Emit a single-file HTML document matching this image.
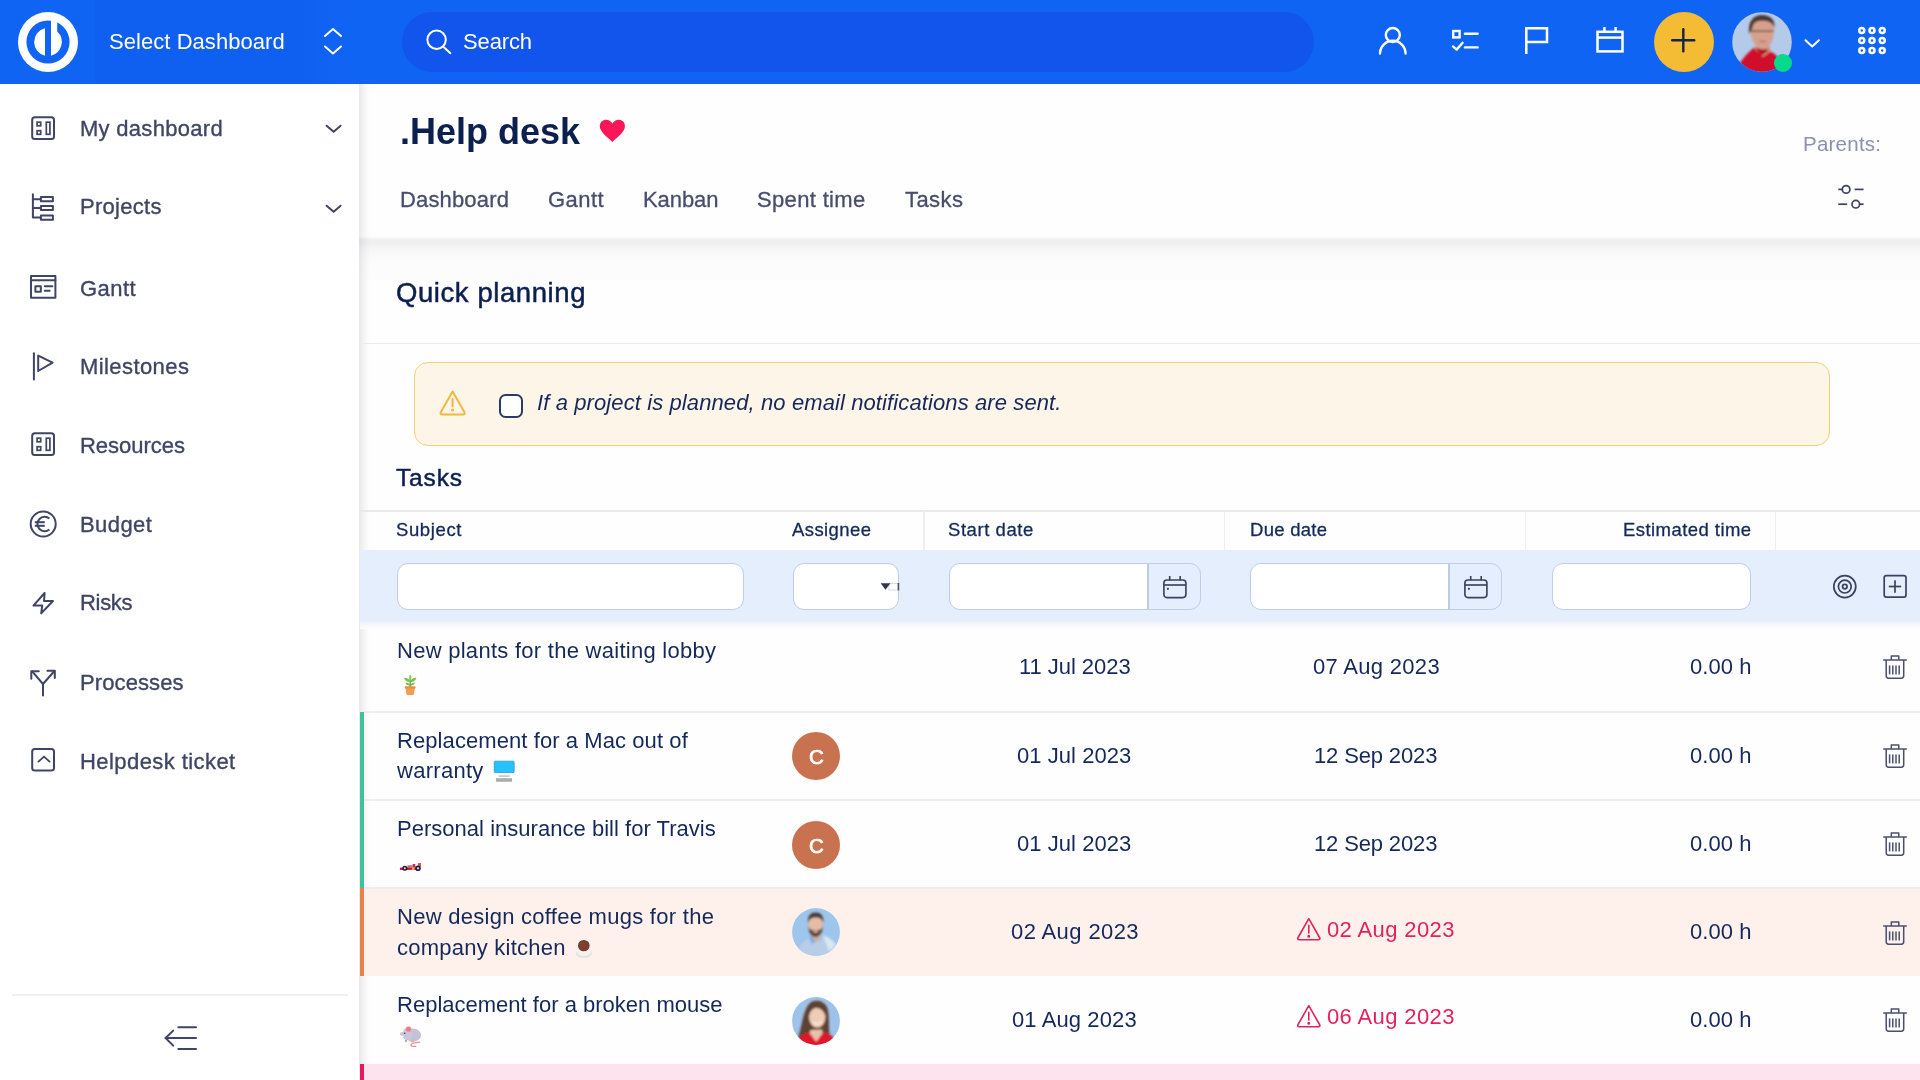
<!DOCTYPE html>
<html lang="en">
<head>
<meta charset="utf-8">
<title>.Help desk - Quick planning</title>
<style>
*{box-sizing:border-box;margin:0;padding:0}
html,body{width:1920px;height:1080px;overflow:hidden;background:#fff}
body{font-family:"Liberation Sans",sans-serif;position:relative;color:#14285a}
.abs{position:absolute}
.t{position:absolute;white-space:nowrap;line-height:1;will-change:transform}
svg{position:absolute;overflow:visible}

/* ---------- top bar ---------- */
#top{position:absolute;left:0;top:0;width:1920px;height:84px;background:#1064f4}
#dashsel{position:absolute;left:95px;top:0;width:260px;height:84px;background:linear-gradient(90deg,#0f60f1,#0f60f1 80%,#1064f4)}
#search{position:absolute;left:402px;top:12px;width:912px;height:60px;border-radius:30px;background:#1155ec}

/* ---------- sidebar ---------- */
#side{position:absolute;left:0;top:84px;width:359px;height:996px;background:#fff}
.ico{stroke:#3f4565;fill:none;stroke-width:2;stroke-linecap:round;stroke-linejoin:round}

/* ---------- main ---------- */
#main{position:absolute;left:359px;top:84px;width:1561px;height:996px;background:#fefefe}
</style>
</head>
<body>

<div id="main"></div>
<div class="abs" style="left:359px;top:236px;width:1561px;height:44px;background:linear-gradient(to bottom,#fff 0,#f4f4f5 2.5px,#eeeeef 5px,#f1f1f2 8px,#f5f5f6 12px,#f9f9fa 17px,#fbfbfb 23px,#fdfdfd 44px)"></div>
<div class="abs" style="left:359px;top:84px;width:11px;height:996px;background:linear-gradient(to right,rgba(20,20,40,.088) 0,rgba(20,20,40,.066) 2.5px,rgba(20,20,40,.04) 5px,rgba(20,20,40,.018) 8px,rgba(20,20,40,0) 11px)"></div>
<div class="t" style="left:400.10px;top:107.9px;font-size:36px;line-height:47px;color:#0c2050;letter-spacing:0.006px;font-weight:bold;">.Help desk</div>
<svg style="left:599px;top:119px" width="27" height="24" viewBox="0 0 27 24"><path d="M13.4 23 C10 19.8 2.6 14.2 1.2 9.6 C-0.2 4.6 2.8 0.8 7 0.8 C9.8 0.8 12 2.2 13.4 4.6 C14.8 2.2 17 0.8 19.8 0.8 C24 0.8 27 4.6 25.6 9.6 C24.2 14.2 16.8 19.8 13.4 23 Z" fill="#fb1758"/></svg>
<div class="t" style="left:1802.90px;top:130.0px;font-size:20.5px;line-height:27px;color:#8b91ab;letter-spacing:0.236px;">Parents:</div>
<div class="t" style="left:400.40px;top:184.5px;font-size:22px;line-height:29px;color:#474d6c;letter-spacing:0.156px;-webkit-text-stroke:0.3px #474d6c;">Dashboard</div>
<div class="t" style="left:548.30px;top:184.5px;font-size:22px;line-height:29px;color:#474d6c;letter-spacing:0.450px;-webkit-text-stroke:0.3px #474d6c;">Gantt</div>
<div class="t" style="left:642.50px;top:184.5px;font-size:22px;line-height:29px;color:#474d6c;letter-spacing:-0.070px;-webkit-text-stroke:0.3px #474d6c;">Kanban</div>
<div class="t" style="left:757.30px;top:184.5px;font-size:22px;line-height:29px;color:#474d6c;letter-spacing:0.339px;-webkit-text-stroke:0.3px #474d6c;">Spent time</div>
<div class="t" style="left:904.50px;top:184.5px;font-size:22px;line-height:29px;color:#474d6c;letter-spacing:0.438px;-webkit-text-stroke:0.3px #474d6c;">Tasks</div>
<svg style="left:1834px;top:180px" width="34" height="34" viewBox="0 0 34 34" fill="none" stroke="#3c4160" stroke-width="1.7" stroke-linecap="butt"><circle cx="12.1" cy="9.4" r="3.8"/><path d="M4.3 9.4 L8.3 9.4"/><path d="M20.7 9.4 L29.6 9.4"/><circle cx="21.8" cy="24.2" r="3.8"/><path d="M4.3 24.2 L13.2 24.2"/><path d="M25.6 24.2 L29.6 24.2"/></svg>
<div class="t" style="left:396.40px;top:275.3px;font-size:27.5px;line-height:36px;color:#0c2050;letter-spacing:0.577px;-webkit-text-stroke:0.5px #0c2050;">Quick planning</div>
<div class="abs" style="left:360px;top:342.8px;width:1560px;height:1.6px;background:#ebebef"></div>
<div class="abs" style="left:414px;top:362px;width:1416px;height:84.4px;border:1.6px solid #f3cf7c;border-radius:14px;background:#fdf5e7"></div>
<svg style="left:437px;top:388px" width="32" height="30" viewBox="0 0 32 30" fill="none" stroke="#f1b73f" stroke-width="2" stroke-linejoin="round" stroke-linecap="round"><path d="M15.6 3.6 L3.6 24.6 Q3.2 26.4 5 26.4 L26.2 26.4 Q28 26.4 27.6 24.6 Z"/><path d="M15.6 11 L15.6 18.4"/><circle cx="15.6" cy="22" r=".6" fill="#f1b73f"/></svg>
<div class="abs" style="left:499.2px;top:393.6px;width:24px;height:24px;border:2px solid #2c3a63;border-radius:6.5px;background:#fff"></div>
<div class="t" style="left:536.70px;top:387.7px;font-size:22px;line-height:29px;color:#14285a;letter-spacing:0.105px;font-style:italic;">If a project is planned, no email notifications are sent.</div>
<div class="t" style="left:396.40px;top:461.5px;font-size:24.5px;line-height:32px;color:#0c2050;letter-spacing:0.838px;-webkit-text-stroke:0.5px #0c2050;">Tasks</div>
<div class="abs" style="left:360px;top:510px;width:1560px;height:1.6px;background:#e9e9ed"></div>
<div class="abs" style="left:923.2px;top:511px;width:1.6px;height:39px;background:#eeeef2"></div>
<div class="abs" style="left:1223.6px;top:511px;width:1.6px;height:39px;background:#eeeef2"></div>
<div class="abs" style="left:1524.6px;top:511px;width:1.6px;height:39px;background:#eeeef2"></div>
<div class="abs" style="left:1774.8px;top:511px;width:1.6px;height:39px;background:#eeeef2"></div>
<div class="t" style="left:396.40px;top:518.1px;font-size:18.5px;line-height:24px;color:#14285a;letter-spacing:0.617px;-webkit-text-stroke:0.3px #14285a;">Subject</div>
<div class="t" style="left:792.00px;top:518.1px;font-size:18.5px;line-height:24px;color:#14285a;letter-spacing:0.414px;-webkit-text-stroke:0.3px #14285a;">Assignee</div>
<div class="t" style="left:948.25px;top:518.1px;font-size:18.5px;line-height:24px;color:#14285a;letter-spacing:0.561px;-webkit-text-stroke:0.3px #14285a;">Start date</div>
<div class="t" style="left:1249.80px;top:518.1px;font-size:18.5px;line-height:24px;color:#14285a;letter-spacing:0.271px;-webkit-text-stroke:0.3px #14285a;">Due date</div>
<div class="t" style="left:1622.60px;top:518.1px;font-size:18.5px;line-height:24px;color:#14285a;letter-spacing:0.442px;-webkit-text-stroke:0.3px #14285a;">Estimated time</div>
<div class="abs" style="left:360px;top:550px;width:1560px;height:79px;background:linear-gradient(to bottom,#e4eefc 0,#e4eefc 68px,#e9f0fc 71px,#f3f6fd 74.5px,#fbfcfe 77.5px,#fefefe 79px)"></div>
<div class="abs" style="left:396.5px;top:563px;width:347px;height:47.4px;border:1.5px solid #bfcdea;border-radius:11px;background:#fff"></div>
<div class="abs" style="left:792.5px;top:563px;width:106.8px;height:47.4px;border:1.5px solid #bfcdea;border-radius:11px;background:#fff"></div>
<svg style="left:878px;top:580px" width="24" height="14" viewBox="0 0 24 14"><rect x="11" y="3.4" width="10" height="6.6" fill="#fff" stroke="#d8dbe4" stroke-width="1"/><rect x="19.6" y="3" width="1.6" height="7.4" fill="#4a4f6e"/><path d="M2.6 3.2 L12.4 3.2 L7.5 9.8 Z" fill="#33344f"/></svg>
<div class="abs" style="left:948.5px;top:563px;width:252px;height:47.4px;border:1.5px solid #bfcdea;border-radius:11px;background:#e4eefc;overflow:hidden"><div style="position:absolute;left:0;top:0;width:199.6px;height:100%;background:#fff;border-right:2.3px solid #bccbe8"></div></div>
<svg style="left:1159.5px;top:573px" width="30" height="28" viewBox="0 0 30 28" fill="none" stroke="#3c4160" stroke-width="1.65" stroke-linecap="butt"><rect x="3.9" y="7" width="22" height="17.6" rx="3"/><path d="M3.9 12 L25.9 12"/><path d="M9.7 3 L9.7 7.4"/><path d="M20.2 3 L20.2 7.4"/><circle cx="7.9" cy="15.8" r="1.1" fill="#3c4160" stroke="none"/></svg>
<div class="abs" style="left:1249.7px;top:563px;width:252px;height:47.4px;border:1.5px solid #bfcdea;border-radius:11px;background:#e4eefc;overflow:hidden"><div style="position:absolute;left:0;top:0;width:199.6px;height:100%;background:#fff;border-right:2.3px solid #bccbe8"></div></div>
<svg style="left:1460.7px;top:573px" width="30" height="28" viewBox="0 0 30 28" fill="none" stroke="#3c4160" stroke-width="1.65" stroke-linecap="butt"><rect x="3.9" y="7" width="22" height="17.6" rx="3"/><path d="M3.9 12 L25.9 12"/><path d="M9.7 3 L9.7 7.4"/><path d="M20.2 3 L20.2 7.4"/><circle cx="7.9" cy="15.8" r="1.1" fill="#3c4160" stroke="none"/></svg>
<div class="abs" style="left:1552.2px;top:563px;width:199.2px;height:47.4px;border:1.5px solid #bfcdea;border-radius:11px;background:#fff"></div>
<svg style="left:1830px;top:572px" width="30" height="30" viewBox="0 0 30 30" fill="none" stroke="#3c4160" stroke-width="1.7"><circle cx="14.8" cy="14.6" r="11"/><circle cx="14.8" cy="14.6" r="6.4"/><circle cx="14.8" cy="14.6" r="2.3"/></svg>
<svg style="left:1880px;top:572px" width="30" height="30" viewBox="0 0 30 30" fill="none" stroke="#3c4160" stroke-width="1.7" stroke-linecap="butt"><rect x="4.2" y="3.6" width="21.8" height="21.6" rx="2.2"/><path d="M8.8 14.5 L21.2 14.5"/><path d="M15 8.2 L15 20.8"/></svg>
<div class="abs" style="left:360px;top:888.3px;width:1560px;height:87.5px;background:#fef0ea"></div>
<div class="abs" style="left:360px;top:1064.4px;width:1560px;height:16px;background:#fce3ee"></div>
<div class="abs" style="left:360px;top:711.2px;width:1560px;height:1.5px;background:#ededf0"></div>
<div class="abs" style="left:360px;top:799.2px;width:1560px;height:1.5px;background:#ededf0"></div>
<div class="abs" style="left:360px;top:887.4px;width:1560px;height:1.5px;background:#ededf0"></div>
<div class="abs" style="left:360px;top:712px;width:3.8px;height:176.3px;background:#3dc39b"></div>
<div class="abs" style="left:360px;top:888.3px;width:3.8px;height:87.5px;background:#e9814b"></div>
<div class="abs" style="left:360px;top:1064.4px;width:3.8px;height:16px;background:#e8185e"></div>
<div class="t" style="left:396.50px;top:636.2px;font-size:22px;line-height:29px;color:#14285a;letter-spacing:0.271px;">New plants for the waiting lobby</div>
<div class="t" style="left:396.50px;top:726.1px;font-size:22px;line-height:29px;color:#14285a;letter-spacing:0.080px;">Replacement for a Mac out of</div>
<div class="t" style="left:396.55px;top:756.3px;font-size:22px;line-height:29px;color:#14285a;letter-spacing:0.286px;">warranty</div>
<div class="t" style="left:396.50px;top:813.9px;font-size:22px;line-height:29px;color:#14285a;letter-spacing:0.024px;">Personal insurance bill for Travis</div>
<div class="t" style="left:396.50px;top:901.7px;font-size:22px;line-height:29px;color:#14285a;letter-spacing:0.272px;">New design coffee mugs for the</div>
<div class="t" style="left:396.50px;top:932.7px;font-size:22px;line-height:29px;color:#14285a;letter-spacing:0.236px;">company kitchen</div>
<div class="t" style="left:396.50px;top:989.9px;font-size:22px;line-height:29px;color:#14285a;letter-spacing:0.007px;">Replacement for a broken mouse</div>
<div class="t" style="left:1018.50px;top:652.3px;font-size:22px;line-height:29px;color:#14285a;letter-spacing:-0.045px;">11 Jul 2023</div>
<div class="t" style="left:1312.80px;top:652.3px;font-size:22px;line-height:29px;color:#14285a;letter-spacing:0.305px;">07 Aug 2023</div>
<div class="t" style="left:1690.10px;top:652.3px;font-size:22px;line-height:29px;color:#14285a;letter-spacing:0.050px;">0.00 h</div>
<svg style="left:1880px;top:652.4px" width="30" height="30" viewBox="0 0 30 30" fill="none" stroke="#4a4f6e" stroke-width="1.5" stroke-linecap="butt" stroke-linejoin="round"><path d="M3.2 8 L26.8 8"/><path d="M11.3 8 L11.3 4 L18.8 4 L18.8 8"/><path d="M6.2 8 L6.2 23.8 Q6.2 26.2 8.6 26.2 L21.3 26.2 Q23.7 26.2 23.7 23.8 L23.7 8"/><path d="M9.6 13.4 L9.6 22.4"/><path d="M12.8 13.4 L12.8 22.4"/><path d="M16 13.4 L16 22.4"/><path d="M19.2 13.4 L19.2 22.4"/></svg>
<div class="t" style="left:1017.30px;top:741.2px;font-size:22px;line-height:29px;color:#14285a;letter-spacing:0.045px;">01 Jul 2023</div>
<div class="t" style="left:1314.10px;top:741.2px;font-size:22px;line-height:29px;color:#14285a;letter-spacing:-0.140px;">12 Sep 2023</div>
<div class="t" style="left:1690.10px;top:741.2px;font-size:22px;line-height:29px;color:#14285a;letter-spacing:0.050px;">0.00 h</div>
<svg style="left:1880px;top:741.3px" width="30" height="30" viewBox="0 0 30 30" fill="none" stroke="#4a4f6e" stroke-width="1.5" stroke-linecap="butt" stroke-linejoin="round"><path d="M3.2 8 L26.8 8"/><path d="M11.3 8 L11.3 4 L18.8 4 L18.8 8"/><path d="M6.2 8 L6.2 23.8 Q6.2 26.2 8.6 26.2 L21.3 26.2 Q23.7 26.2 23.7 23.8 L23.7 8"/><path d="M9.6 13.4 L9.6 22.4"/><path d="M12.8 13.4 L12.8 22.4"/><path d="M16 13.4 L16 22.4"/><path d="M19.2 13.4 L19.2 22.4"/></svg>
<div class="t" style="left:1017.30px;top:829.2px;font-size:22px;line-height:29px;color:#14285a;letter-spacing:0.045px;">01 Jul 2023</div>
<div class="t" style="left:1314.10px;top:829.2px;font-size:22px;line-height:29px;color:#14285a;letter-spacing:-0.140px;">12 Sep 2023</div>
<div class="t" style="left:1690.10px;top:829.2px;font-size:22px;line-height:29px;color:#14285a;letter-spacing:0.050px;">0.00 h</div>
<svg style="left:1880px;top:829.3px" width="30" height="30" viewBox="0 0 30 30" fill="none" stroke="#4a4f6e" stroke-width="1.5" stroke-linecap="butt" stroke-linejoin="round"><path d="M3.2 8 L26.8 8"/><path d="M11.3 8 L11.3 4 L18.8 4 L18.8 8"/><path d="M6.2 8 L6.2 23.8 Q6.2 26.2 8.6 26.2 L21.3 26.2 Q23.7 26.2 23.7 23.8 L23.7 8"/><path d="M9.6 13.4 L9.6 22.4"/><path d="M12.8 13.4 L12.8 22.4"/><path d="M16 13.4 L16 22.4"/><path d="M19.2 13.4 L19.2 22.4"/></svg>
<div class="t" style="left:1010.90px;top:917.4px;font-size:22px;line-height:29px;color:#14285a;letter-spacing:0.395px;">02 Aug 2023</div>
<div class="t" style="left:1327.40px;top:914.9px;font-size:22px;line-height:29px;color:#e0225e;letter-spacing:0.385px;">02 Aug 2023</div>
<svg style="left:1294px;top:916.3px" width="30" height="28" viewBox="0 0 30 28" fill="none" stroke="#e0225e" stroke-width="1.6" stroke-linejoin="round" stroke-linecap="round"><path d="M14.8 2.6 L3.8 22 Q3.4 23.8 5.2 23.8 L24.4 23.8 Q26.2 23.8 25.8 22 Z"/><path d="M14.8 9.4 L14.8 17"/><circle cx="14.8" cy="20.2" r=".7" fill="#e0225e"/></svg>
<div class="t" style="left:1690.10px;top:917.4px;font-size:22px;line-height:29px;color:#14285a;letter-spacing:0.050px;">0.00 h</div>
<svg style="left:1880px;top:917.5px" width="30" height="30" viewBox="0 0 30 30" fill="none" stroke="#4a4f6e" stroke-width="1.5" stroke-linecap="butt" stroke-linejoin="round"><path d="M3.2 8 L26.8 8"/><path d="M11.3 8 L11.3 4 L18.8 4 L18.8 8"/><path d="M6.2 8 L6.2 23.8 Q6.2 26.2 8.6 26.2 L21.3 26.2 Q23.7 26.2 23.7 23.8 L23.7 8"/><path d="M9.6 13.4 L9.6 22.4"/><path d="M12.8 13.4 L12.8 22.4"/><path d="M16 13.4 L16 22.4"/><path d="M19.2 13.4 L19.2 22.4"/></svg>
<div class="t" style="left:1012.30px;top:1005.2px;font-size:22px;line-height:29px;color:#14285a;letter-spacing:0.105px;">01 Aug 2023</div>
<div class="t" style="left:1327.40px;top:1002.0px;font-size:22px;line-height:29px;color:#e0225e;letter-spacing:0.385px;">06 Aug 2023</div>
<svg style="left:1294px;top:1003.4px" width="30" height="28" viewBox="0 0 30 28" fill="none" stroke="#e0225e" stroke-width="1.6" stroke-linejoin="round" stroke-linecap="round"><path d="M14.8 2.6 L3.8 22 Q3.4 23.8 5.2 23.8 L24.4 23.8 Q26.2 23.8 25.8 22 Z"/><path d="M14.8 9.4 L14.8 17"/><circle cx="14.8" cy="20.2" r=".7" fill="#e0225e"/></svg>
<div class="t" style="left:1690.10px;top:1005.2px;font-size:22px;line-height:29px;color:#14285a;letter-spacing:0.050px;">0.00 h</div>
<svg style="left:1880px;top:1005.3px" width="30" height="30" viewBox="0 0 30 30" fill="none" stroke="#4a4f6e" stroke-width="1.5" stroke-linecap="butt" stroke-linejoin="round"><path d="M3.2 8 L26.8 8"/><path d="M11.3 8 L11.3 4 L18.8 4 L18.8 8"/><path d="M6.2 8 L6.2 23.8 Q6.2 26.2 8.6 26.2 L21.3 26.2 Q23.7 26.2 23.7 23.8 L23.7 8"/><path d="M9.6 13.4 L9.6 22.4"/><path d="M12.8 13.4 L12.8 22.4"/><path d="M16 13.4 L16 22.4"/><path d="M19.2 13.4 L19.2 22.4"/></svg>
<div class="abs" style="left:792.2px;top:731.8px;width:48px;height:48px;border-radius:24px;background:#c9724f"></div>
<div class="t" style="left:809.30px;top:742.9px;font-size:20.5px;line-height:27px;color:#fff;-webkit-text-stroke:0.7px #fff;">C</div>
<div class="abs" style="left:792.2px;top:820.8px;width:48px;height:48px;border-radius:24px;background:#c9724f"></div>
<div class="t" style="left:809.30px;top:831.9px;font-size:20.5px;line-height:27px;color:#fff;-webkit-text-stroke:0.7px #fff;">C</div>
<svg style="left:399px;top:673px" width="22" height="24" viewBox="0 0 22 24"><path d="M6.4 14.4 L16 14.4 L15 21 Q14.8 22 13.8 22 L8.6 22 Q7.6 22 7.4 21 Z" fill="#f0a052"/><rect x="5.8" y="13.2" width="10.8" height="2.4" rx="1" fill="#e58f45"/><path d="M11.2 13.4 L11.2 6" stroke="#5aa83c" stroke-width="1.4"/><path d="M11.2 9 C8 9.4 5.6 7.6 5 4.8 C8 4.6 10.6 6 11.2 9 Z" fill="#7bc44c"/><path d="M11.2 9 C14.4 9.4 16.8 7.6 17.4 4.8 C14.4 4.6 11.8 6 11.2 9 Z" fill="#7bc44c"/><path d="M11.2 7 C9.4 5.4 9.6 3 11.2 1.4 C12.8 3 13 5.4 11.2 7 Z" fill="#8fd45a"/><path d="M11.2 12.4 C9 12.6 7 11.6 6.2 9.8 C8.4 9.4 10.4 10.4 11.2 12.4 Z" fill="#6cb843"/><path d="M11.2 12.4 C13.4 12.6 15.4 11.6 16.2 9.8 C14 9.4 12 10.4 11.2 12.4 Z" fill="#6cb843"/></svg>
<svg style="left:493px;top:760px" width="23" height="23" viewBox="0 0 23 23"><rect x="1.3" y="1.2" width="19.8" height="11.4" rx=".9" fill="#24c2fc" stroke="#3f96d6" stroke-width=".9"/><path d="M4.8 13 L17.7 13 L16.4 16.6 L6 16.6 Z" fill="#f3f5f7"/><path d="M5.4 15.5 L17 15.5 L16.4 16.8 L6 16.8 Z" fill="#bdbcba"/><rect x="3" y="18.2" width="16" height="3.5" rx=".5" fill="#a9aaad"/><rect x="3" y="18.2" width="16" height="1" fill="#b9babd"/></svg>
<svg style="left:399px;top:861px" width="24" height="12" viewBox="0 0 24 12"><rect x=".9" y="6.6" width="3.8" height="2.3" fill="#c0184a"/><rect x="4" y="5.8" width="16" height="3.1" fill="#c8102e"/><rect x="12.9" y="6.4" width="2.6" height="2.5" fill="#f2b23c"/><rect x="7.6" y="5.5" width="9.6" height="1" fill="#f6a0a8"/><rect x="13.7" y="2.9" width="2.6" height="3" rx=".5" fill="#b4324e"/><rect x="8.6" y="4.4" width="5" height="1.3" fill="#c44a5a"/><rect x="18.9" y="1.9" width="3.1" height="3.8" rx=".4" fill="#d35a42"/><circle cx="5.8" cy="7.3" r="2.5" fill="#2a1830"/><circle cx="5.8" cy="7.3" r="1" fill="#f0e6f8"/><circle cx="19" cy="7.3" r="2.8" fill="#2a1a40"/><circle cx="19" cy="7.3" r="1.15" fill="#e4dafa"/></svg>
<svg style="left:575px;top:938px" width="18" height="21" viewBox="0 0 18 21"><ellipse cx="8.8" cy="15.6" rx="7.9" ry="4" fill="#dcdcdc"/><ellipse cx="8.8" cy="14.8" rx="7.6" ry="3.8" fill="#ecebe8"/><path d="M2 8 L15.6 8 L14.6 15 Q13.6 17.8 8.8 17.8 Q4 17.8 3 15 Z" fill="#f4f3f0"/><ellipse cx="8.8" cy="7.8" rx="6.9" ry="6.4" fill="#f6f4f2"/><ellipse cx="8.8" cy="7.6" rx="5.8" ry="5.7" fill="#6a3a30"/><ellipse cx="8.8" cy="7.8" rx="5.1" ry="5" fill="#7e3f2c"/></svg>
<svg style="left:399px;top:1025px" width="24" height="23" viewBox="0 0 24 23"><path d="M21 17.2 C17 17.6 13 18 12.2 19.4 C11.6 20.7 12.4 21.4 13.6 21.4 L17.2 21.4" fill="none" stroke="#f08a8a" stroke-width="1.25"/><ellipse cx="13.8" cy="10.2" rx="8.2" ry="6.6" fill="#c4c2d8"/><rect x="4.4" y="3.2" width="9" height="11.4" rx="3.4" fill="#c9c7dc"/><ellipse cx="3.2" cy="8.9" rx="2.3" ry="1.9" fill="#c9c5c2"/><circle cx="5.7" cy="8.3" r=".75" fill="#2e2a3a"/><circle cx="9.5" cy="4.2" r="2.9" fill="#f7a0ac"/><circle cx="9.5" cy="4.2" r="2.2" fill="#f4748a"/><ellipse cx="7" cy="15.7" rx="1" ry="1.2" fill="#c583b5"/><ellipse cx="13.4" cy="16.4" rx="1.8" ry=".9" fill="#f2a0a6"/></svg>
<svg style="left:792.1px;top:908.2px" width="48" height="48" viewBox="0 0 48 48"><defs><clipPath id="av1"><circle cx="24" cy="24" r="23.9"/></clipPath><filter id="b1" x="-20%" y="-20%" width="140%" height="140%"><feGaussianBlur stdDeviation="1.15"/></filter></defs><g clip-path="url(#av1)"><rect width="48" height="48" fill="#9ec5ec"/><g filter="url(#b1)"><path d="M4 50 C5 38 11 33 18 30 L24 28 L31 28 C38 31 43 36 45 50 Z" fill="#b7cde8"/><path d="M31 27.6 C36 29 41 32 44 37 L37 43 Z" fill="#dbe6f3"/><path d="M17.4 30 L21 26.4 L23.6 33.6 L20 36 Z" fill="#7ea9dd"/><path d="M28.6 26.4 L31 30 L27 34.6 L24.6 32 Z" fill="#a8c3e6"/><path d="M20 25 L28 25 L27 32 L23.6 34 L21 31 Z" fill="#d8aa92"/><ellipse cx="23.6" cy="16.6" rx="7.2" ry="9.6" fill="#e6bca4"/><path d="M16 15.6 C15 7 19.6 4.4 23.8 4.6 C28.6 4.6 32 7.6 31.2 15.4 C30.2 11 27.4 9.4 23.6 9.6 C19.8 9.6 17.2 11 16 15.6 Z" fill="#4a3a30"/><path d="M16.2 17.6 C16.6 25.6 19.8 29 23.6 29 C27.4 29 30.6 25.6 31 17.6 C30 21.6 28 22.4 23.6 22.2 C19.2 22.4 17.2 21.6 16.2 17.6 Z" fill="#5e473a"/><ellipse cx="23.6" cy="23.6" rx="2.6" ry=".9" fill="#e9c9bb"/></g></g></svg>
<svg style="left:792.1px;top:997.3px" width="48" height="48" viewBox="0 0 48 48"><defs><clipPath id="av2"><circle cx="24" cy="24" r="23.9"/></clipPath><filter id="b2" x="-20%" y="-20%" width="140%" height="140%"><feGaussianBlur stdDeviation="1.15"/></filter></defs><g clip-path="url(#av2)"><rect width="48" height="48" fill="#9dc3ea"/><g filter="url(#b2)"><path d="M6 41 C10 30 11 10 20 4.6 C25 2.6 32 4 35 10 C38 18 36 30 38 39 L30 40 L14 41 Z" fill="#5e4032"/><path d="M3 50 C5 41 10 37 17 35.6 L24 44 L31 35 C36 36 40 38 42 42 L42 50 Z" fill="#e0142c"/><path d="M18.6 33 L30 32.6 L30.6 36 L24.4 44.4 L17.6 36 Z" fill="#e9c2ac"/><ellipse cx="25.2" cy="19.8" rx="8.2" ry="11" fill="#efccb6"/><path d="M16.6 21 C15 11 19 6 25 6 C31 6 34.6 10 33.6 19 C31.6 13.6 28 10.6 24 11 C20 11.4 17.6 15 16.6 21 Z" fill="#5e4032"/><path d="M21.4 25.4 C23.6 27.4 27 27.4 29.6 25" stroke="#fff" stroke-width="1.3" fill="none" opacity=".85"/></g></g></svg>

<div id="side">
  <div class="t" style="left:79.60px;top:30.2px;font-size:22px;line-height:29px;color:#3f4565;letter-spacing:0.291px;-webkit-text-stroke:0.35px #3f4565;">My dashboard</div>
  <div class="t" style="left:79.60px;top:108.4px;font-size:22px;line-height:29px;color:#3f4565;letter-spacing:0.293px;-webkit-text-stroke:0.35px #3f4565;">Projects</div>
  <div class="t" style="left:79.60px;top:189.5px;font-size:22px;line-height:29px;color:#3f4565;letter-spacing:0.450px;-webkit-text-stroke:0.35px #3f4565;">Gantt</div>
  <div class="t" style="left:79.60px;top:267.6px;font-size:22px;line-height:29px;color:#3f4565;letter-spacing:0.417px;-webkit-text-stroke:0.35px #3f4565;">Milestones</div>
  <div class="t" style="left:79.60px;top:347.0px;font-size:22px;line-height:29px;color:#3f4565;letter-spacing:-0.031px;-webkit-text-stroke:0.35px #3f4565;">Resources</div>
  <div class="t" style="left:79.60px;top:425.5px;font-size:22px;line-height:29px;color:#3f4565;letter-spacing:0.430px;-webkit-text-stroke:0.35px #3f4565;">Budget</div>
  <div class="t" style="left:79.60px;top:504.2px;font-size:22px;line-height:29px;color:#3f4565;letter-spacing:-0.325px;-webkit-text-stroke:0.35px #3f4565;">Risks</div>
  <div class="t" style="left:79.60px;top:583.7px;font-size:22px;line-height:29px;color:#3f4565;letter-spacing:0.100px;-webkit-text-stroke:0.35px #3f4565;">Processes</div>
  <div class="t" style="left:79.60px;top:663.1px;font-size:22px;line-height:29px;color:#3f4565;letter-spacing:0.429px;-webkit-text-stroke:0.35px #3f4565;">Helpdesk ticket</div>
  <!-- dashboard icon -->
  <svg class="ico" style="left:29px;top:30.1px" width="28" height="28" viewBox="0 0 28 28"><rect x="3.2" y="3.3" width="21.8" height="21.8" rx="2.6"/><g stroke-width="1.7" stroke-linejoin="miter"><rect x="8.1" y="8.2" width="3.6" height="3.6"/><rect x="8.1" y="16.7" width="3.6" height="3.6"/><rect x="17.3" y="8.2" width="3.6" height="12.1"/></g></svg>
  <!-- projects icon -->
  <svg class="ico" style="left:29px;top:109px" width="28" height="30" viewBox="0 0 28 30" stroke-width="1.8" stroke-linejoin="miter" stroke-linecap="butt"><path d="M3.9 1.2 L3.9 24.6 L11.5 24.6"/><path d="M3.9 6.2 L11.5 6.2"/><path d="M3.9 15 L11.5 15"/><rect x="11.9" y="4.1" width="12" height="4.2"/><rect x="11.9" y="12.9" width="12" height="4.2"/><rect x="11.9" y="22.4" width="12" height="4.4"/></svg>
  <!-- gantt icon -->
  <svg class="ico" style="left:28px;top:189.2px" width="30" height="28" viewBox="0 0 30 28" stroke-width="1.8" stroke-linejoin="miter" stroke-linecap="butt"><rect x="3" y="3.1" width="24.4" height="21.6"/><path d="M3 7.2 L27.4 7.2"/><rect x="7.4" y="13.2" width="5.4" height="5.6"/><path d="M16.8 13.3 L24.4 13.3"/><path d="M16.8 17.8 L21.6 17.8"/></svg>
  <!-- milestones icon -->
  <svg class="ico" style="left:29px;top:268px" width="28" height="30" viewBox="0 0 28 30" stroke-width="1.9" stroke-linejoin="miter" stroke-linecap="butt"><path d="M4.9 1.3 L4.9 27.4"/><path d="M9.2 3.6 L23.6 10.6 L9.2 19 Z"/></svg>
  <!-- resources icon -->
  <svg class="ico" style="left:29px;top:345.6px" width="28" height="28" viewBox="0 0 28 28"><rect x="3.2" y="3.3" width="21.8" height="21.8" rx="2.6"/><g stroke-width="1.7" stroke-linejoin="miter"><rect x="8.1" y="8.2" width="3.6" height="3.6"/><rect x="8.1" y="16.7" width="3.6" height="3.6"/><rect x="17.3" y="8.2" width="3.6" height="12.1"/></g></svg>
  <!-- budget icon -->
  <svg class="ico" style="left:28px;top:425px" width="30" height="30" viewBox="0 0 30 30" stroke-width="1.9"><circle cx="15.2" cy="15" r="12.5"/><path d="M21.4 9.6 A7.2 7.2 0 1 0 21.4 20.4" stroke-linecap="butt"/><path d="M6.8 13.2 L16.8 13.2" stroke-linecap="butt"/><path d="M6.8 16.8 L16.8 16.8" stroke-linecap="butt"/></svg>
  <!-- risks icon -->
  <svg class="ico" style="left:29px;top:505.8px" width="28" height="28" viewBox="0 0 28 28" stroke-width="1.9" stroke-linejoin="miter"><path d="M15.6 3 L4.4 15.6 L13.2 15.6 L12.2 23.4 L24 11 L15 11 Z"/></svg>
  <!-- processes icon -->
  <svg class="ico" style="left:29px;top:584px" width="28" height="30" viewBox="0 0 28 30" stroke-width="1.9" stroke-linejoin="miter" stroke-linecap="butt"><path d="M14 27.4 L14 16 L3.2 3.4"/><path d="M14 16 L25.4 3"/><path d="M2.3 10.8 L2.3 3.2 L9.8 3.2"/><path d="M18.4 2.8 L25.8 2.8 L25.8 10"/></svg>
  <!-- helpdesk icon -->
  <svg class="ico" style="left:29px;top:662px" width="28" height="28" viewBox="0 0 28 28"><rect x="3.2" y="3" width="21.8" height="21.6" rx="2.6"/><path d="M9.4 15.6 L15 10.6 L20.6 15.6" stroke-width="1.9"/></svg>
  <svg class="ico" style="left:324px;top:40.3px" width="20" height="12" viewBox="0 0 20 12" stroke-width="1.8" stroke-linecap="butt" stroke-linejoin="miter"><path d="M2.6 1.8 L9.6 7.8 L16.6 1.8"/></svg>
  <svg class="ico" style="left:324px;top:119.8px" width="20" height="12" viewBox="0 0 20 12" stroke-width="1.8" stroke-linecap="butt" stroke-linejoin="miter"><path d="M2.6 1.8 L9.6 7.8 L16.6 1.8"/></svg>
  <div class="abs" style="left:12px;top:910.4px;width:336px;height:1.4px;background:#f0f0f3"></div>
  <svg class="ico" style="left:162px;top:940px" width="36" height="28" viewBox="0 0 36 28" stroke-width="1.9" stroke-linecap="butt" stroke-linejoin="miter"><path d="M16.4 3.2 L34 3.2"/><path d="M3.6 14 L34 14"/><path d="M16.4 25 L34 25"/><path d="M11.2 6.6 L3.6 14 L11.2 21.6"/></svg>
</div>


<div id="top">
  <div id="dashsel"></div>
  <div id="search"></div>
  <!-- logo -->
  <svg style="left:18px;top:12px" width="60" height="60" viewBox="0 0 60 60">
    <circle cx="30" cy="30" r="30" fill="#fff"/>
    <circle cx="30" cy="30" r="21.6" fill="#1064f4"/>
    <path d="M27 16.2 A14.2 14.2 0 0 0 27 43.8 Z" fill="#fff"/>
    <path d="M33 8.2 L39.2 8.2 L39.2 19.6 A14.2 14.2 0 0 1 33 43.8 Z" fill="#fff"/>
  </svg>
  <div class="t" style="left:109.10px;top:27.4px;font-size:22px;line-height:29px;color:#fff;letter-spacing:0.053px;">Select Dashboard</div>
  <svg style="left:322px;top:26px" width="22" height="30" viewBox="0 0 22 30" fill="none" stroke="#fff" stroke-width="2" stroke-linecap="round" stroke-linejoin="round">
    <path d="M3 10 L11 3 L19 10"/><path d="M3 20.5 L11 27.5 L19 20.5"/>
  </svg>
  <!-- search -->
  <svg style="left:424px;top:28px" width="30" height="28" viewBox="0 0 30 28" fill="none" stroke="#fff" stroke-width="2" stroke-linecap="round">
    <circle cx="12.6" cy="11.8" r="9.2"/><path d="M19.6 19 L26.4 25.2"/>
  </svg>
  <div class="t" style="left:462.80px;top:27.2px;font-size:22px;line-height:29px;color:#fff;letter-spacing:-0.120px;">Search</div>
  <!-- user -->
  <svg style="left:1376px;top:24px" width="34" height="34" viewBox="0 0 34 34" fill="none" stroke="#fff" stroke-width="2.4" stroke-linecap="round">
    <circle cx="16.8" cy="11" r="7"/><path d="M4 29.6 A12.8 12.8 0 0 1 29.6 29.6"/>
  </svg>
  <!-- checklist -->
  <svg style="left:1450px;top:26px" width="32" height="30" viewBox="0 0 32 30" fill="none" stroke="#fff" stroke-width="2.4" stroke-linecap="round" stroke-linejoin="round">
    <rect x="3.2" y="5" width="6.4" height="6.4" stroke-linejoin="miter"/><path d="M15 7.8 L27.6 7.8"/><path d="M3 20.4 L6.6 23.6 L12.6 16.8"/><path d="M15 21.4 L27.6 21.4"/>
  </svg>
  <!-- flag -->
  <svg style="left:1522px;top:24px" width="30" height="34" viewBox="0 0 30 34" fill="none" stroke="#fff" stroke-width="2.5" stroke-linecap="butt" stroke-linejoin="miter">
    <path d="M4.3 30 L4.3 4.2 L25 4.2 L25 18 L4.3 18"/>
  </svg>
  <!-- calendar -->
  <svg style="left:1594px;top:24px" width="32" height="32" viewBox="0 0 32 32" fill="none" stroke="#fff" stroke-width="2.5" stroke-linejoin="miter">
    <rect x="3.5" y="7.8" width="25" height="19.6"/><path d="M3.5 13.6 L28.5 13.6"/><path d="M10.4 3 L10.4 8"/><path d="M21.6 3 L21.6 8"/>
  </svg>
  <!-- plus -->
  <div class="abs" style="left:1654px;top:12px;width:60px;height:60px;border-radius:30px;background:#f4bb34"></div>
  <svg style="left:1669px;top:26.2px" width="30" height="30" viewBox="0 0 30 30" fill="none" stroke="#14234a" stroke-width="2.4" stroke-linecap="round">
    <path d="M3.2 14.2 L25.2 14.2"/><path d="M14.3 3.2 L14.3 25.2"/>
  </svg>
  <!-- avatar -->
  <svg style="left:1731.8px;top:11.9px" width="60" height="60" viewBox="0 0 60 60">
    <defs><clipPath id="avc"><circle cx="30" cy="30" r="29.8"/></clipPath><filter id="bl" x="-20%" y="-20%" width="140%" height="140%"><feGaussianBlur stdDeviation="1.1"/></filter></defs>
    <g clip-path="url(#avc)"><rect width="60" height="60" fill="#b4cae9"/>
      <g filter="url(#bl)">
      <path d="M7 52 L14 43 L22 35.6 L28 38 L37 38.6 L44 43 L52 56 L52 64 L20 64 Z" fill="#d00a2c"/>
      <path d="M22 36 L27 33 L37 33 L39 39 L31 45 Z" fill="#cf8f7a"/>
      <path d="M24 36 L29 44 L36 39 L33 36 Z" fill="#b40a24"/>
      <path d="M18.4 18 C17.6 8 23 3.6 30 3.6 C38 3.6 42.6 8.6 42 18 C42 27 38.4 36.6 31 37.4 C23.6 37.4 19 28 18.4 18 Z" fill="#d6a08d"/>
      <path d="M17.2 22 C15.6 9 21.6 3 30 3 C38.6 3 43.2 8 42.6 16 C41 11.4 37 8.6 30 8.8 C24 8.8 21 11 20.4 16 Z" fill="#4a3833"/>
      <path d="M19 19.2 L41.4 19.2" stroke="#5a3f3a" stroke-width="1.6" opacity=".75"/>
      <ellipse cx="30.5" cy="29.4" rx="3.6" ry="1.2" fill="#c4707a" opacity=".8"/>
      </g>
    </g>
  </svg>
  <div class="abs" style="left:1773.8px;top:53.7px;width:18.2px;height:18.2px;border-radius:9.1px;background:#05d98b"></div>
  <svg style="left:1802px;top:36px" width="20" height="14" viewBox="0 0 20 14" fill="none" stroke="#fff" stroke-width="2" stroke-linecap="round" stroke-linejoin="round">
    <path d="M3.5 4.2 L10.2 10.4 L16.9 4.2"/>
  </svg>
  <!-- grid -->
  <svg style="left:1856px;top:24px" width="32" height="32" viewBox="0 0 32 32" fill="none" stroke="#fff" stroke-width="2.5">
    <circle cx="5.8" cy="6.5" r="2.5"/><circle cx="16" cy="6.5" r="2.5"/><circle cx="26.2" cy="6.5" r="2.5"/>
    <circle cx="5.8" cy="16.5" r="2.5"/><circle cx="16" cy="16.5" r="2.5"/><circle cx="26.2" cy="16.5" r="2.5"/>
    <circle cx="5.8" cy="26.6" r="2.5"/><circle cx="16" cy="26.6" r="2.5"/><circle cx="26.2" cy="26.6" r="2.5"/>
  </svg>
</div>

</body>
</html>
